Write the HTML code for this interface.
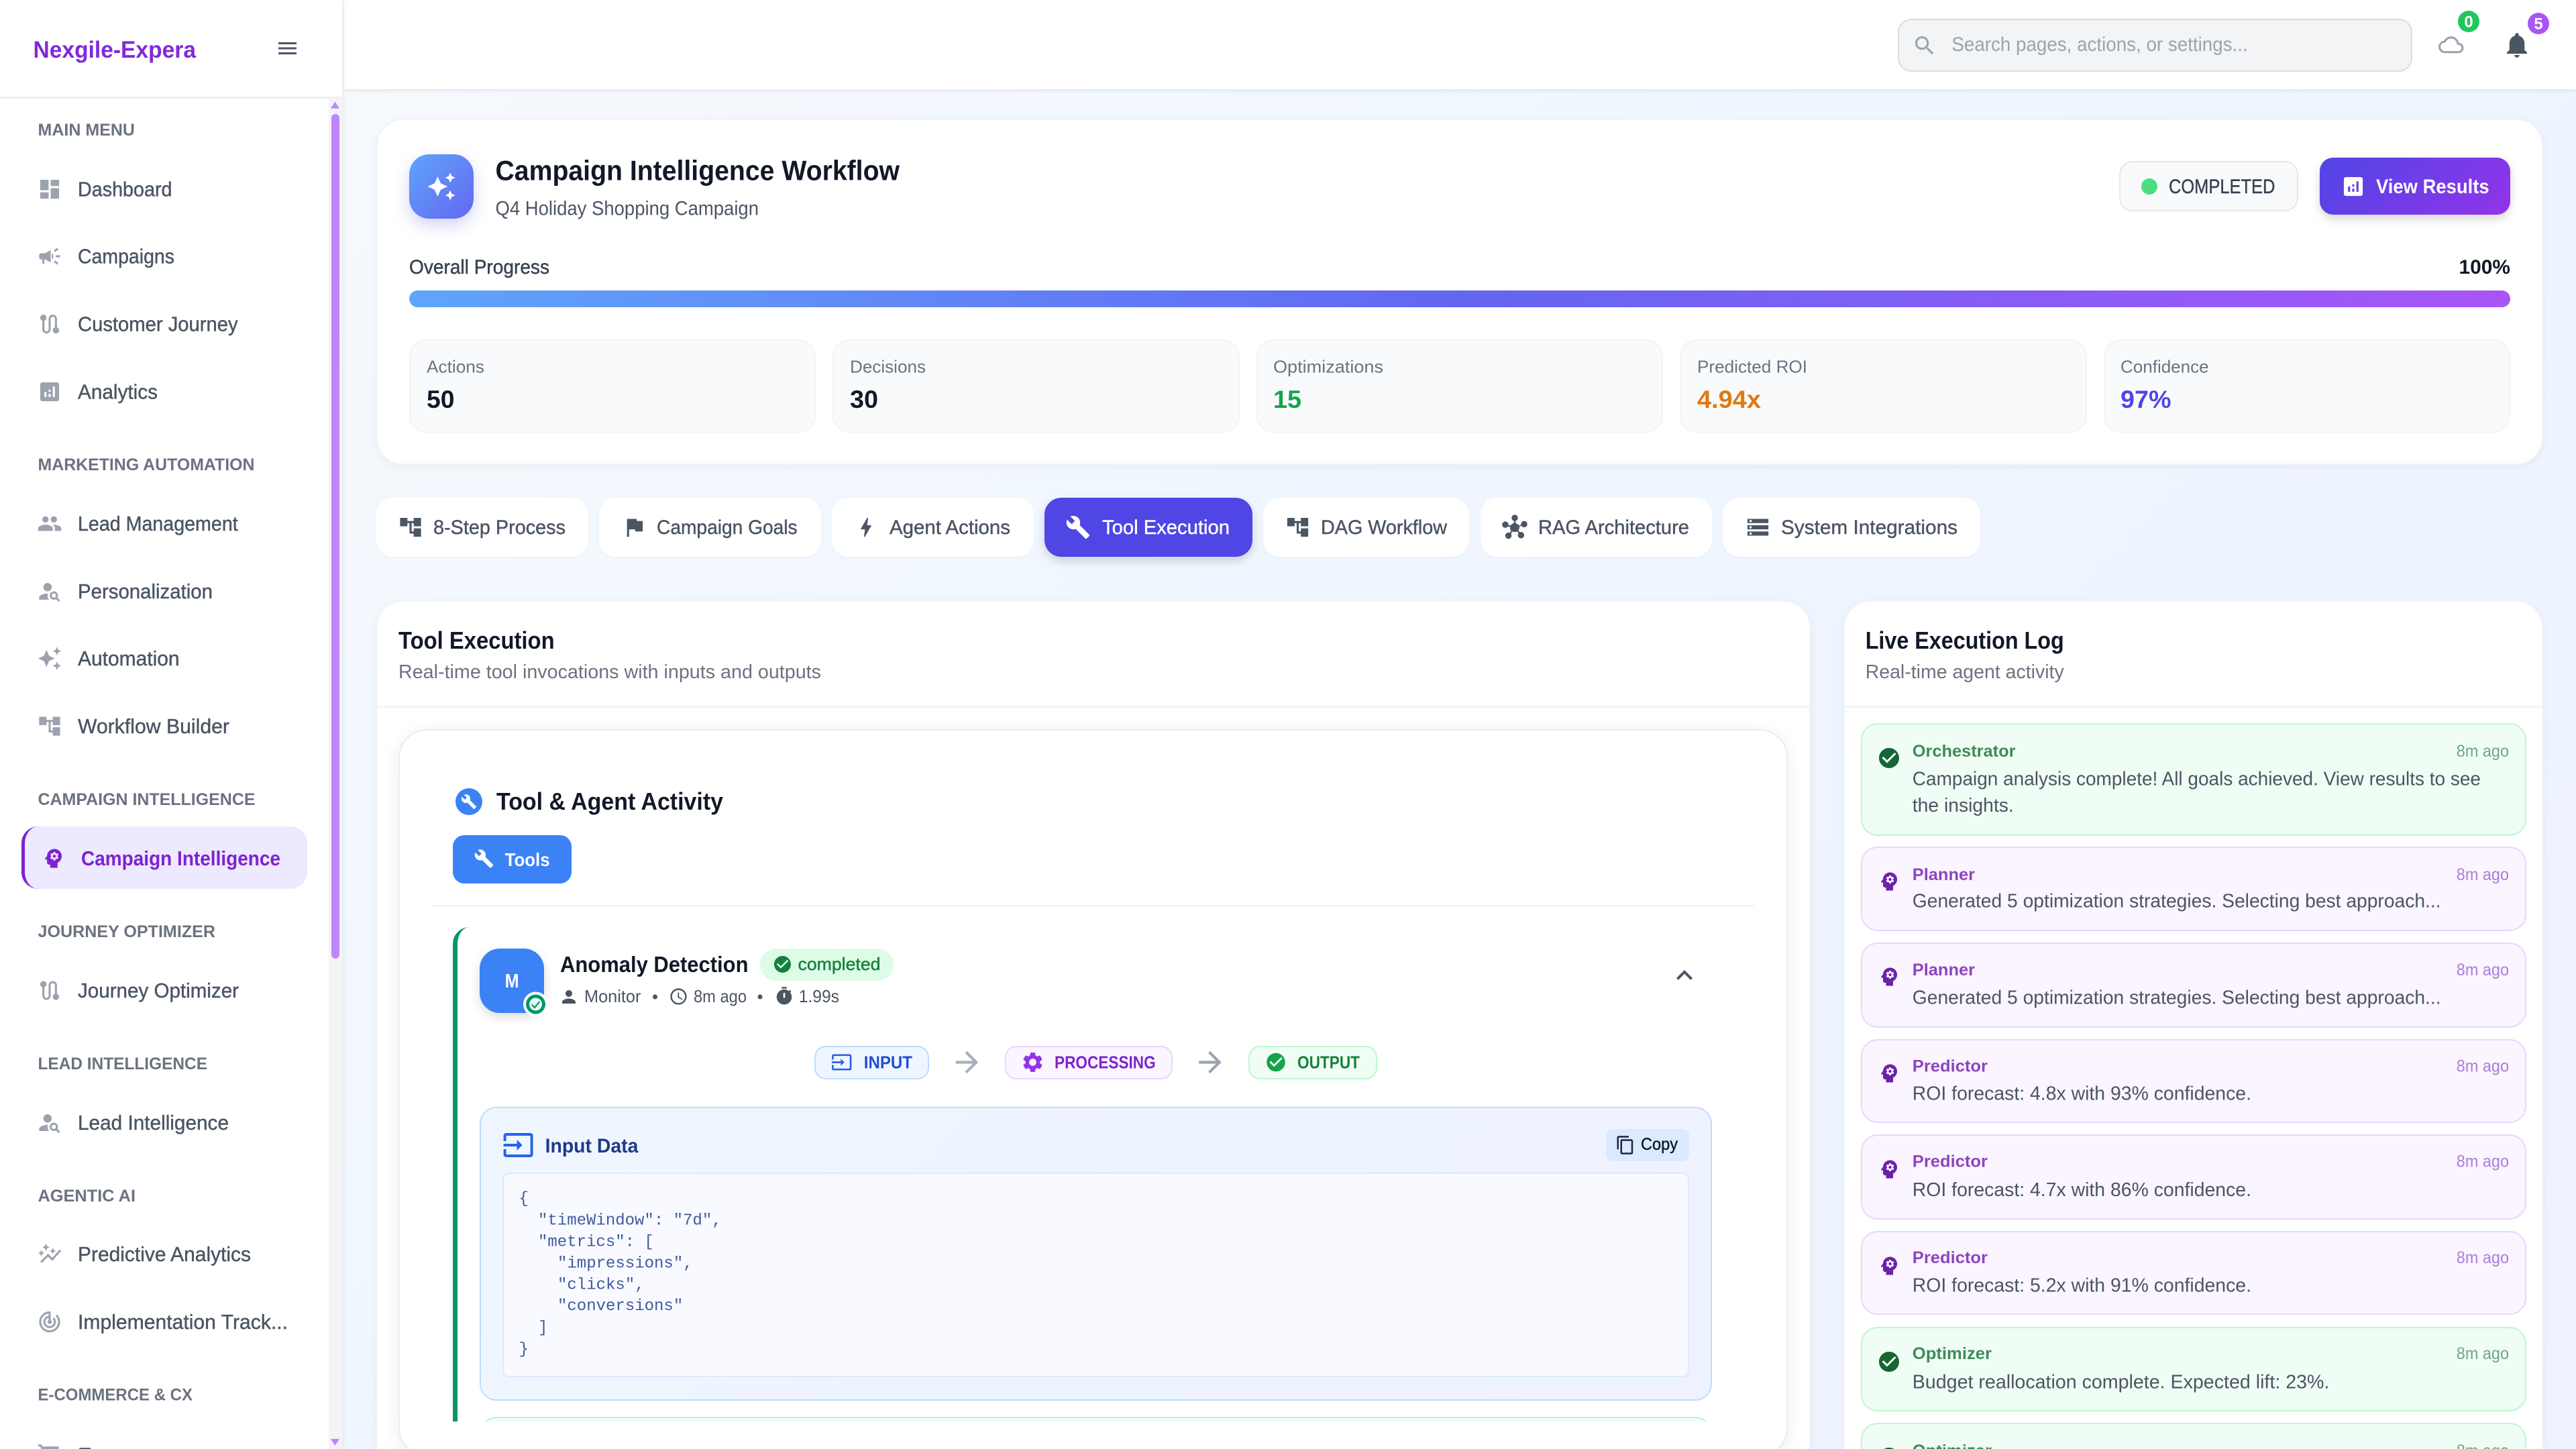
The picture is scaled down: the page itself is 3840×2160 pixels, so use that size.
<!DOCTYPE html>
<html lang="en">
<head>
<meta charset="utf-8">
<title>Campaign Intelligence Workflow</title>
<style>
html,body{margin:0;padding:0;width:3840px;height:2160px;overflow:hidden}
#root{position:absolute;left:0;top:0;width:3840px;height:2160px;overflow:hidden;background:linear-gradient(135deg,#f8fafc 0%,#eff6ff 50%,#eef2ff 100%);font-family:"Liberation Sans",sans-serif}
.b{position:absolute;box-sizing:border-box}
.card{background:#fff;border:2px solid #f3f4f6;border-bottom:0;border-radius:40px 40px 0 0;box-shadow:0 3px 12px rgba(0,0,0,.05)}
.stat{background:#f9fafb;border:2.5px solid #f3f4f6;border-radius:25px;top:506px;height:139px;width:606.4px}
.tab{background:#fff;border-radius:25px;top:742px;height:88px;box-shadow:0 1px 4px rgba(0,0,0,.03)}
.chip{border-radius:17px;top:1558.5px;height:50.5px;border:2.5px solid}
.log{left:2773.7px;width:992.3px;border-radius:25px;border:2.5px solid}
.g{background:#f0fdf4;border-color:#bbf7d0}
.p{background:#faf5ff;border-color:#e9d5ff}
svg.ov{position:absolute;left:0;top:0;width:3840px;height:2160px;overflow:hidden}
text{font-family:"Liberation Sans",sans-serif}
.m{stroke:currentColor;stroke-width:.45}
.mono text{font-family:"Liberation Mono",monospace;font-size:24px;fill:#3f5aa0;white-space:pre}
</style>
</head>
<body>
<div id="root">

<!-- top bar -->
<div class="b" style="left:512px;top:0;width:3328px;height:133px;background:#fff;box-shadow:0 2px 6px rgba(0,0,0,.08)"></div>
<div class="b" style="left:2829px;top:27.5px;width:767px;height:79px;background:#f3f4f6;border:2.5px solid #d9dce3;border-radius:20px"></div>

<!-- sidebar -->
<div class="b" style="left:0;top:0;width:510px;height:2160px;background:#fff;box-shadow:2px 0 6px rgba(0,0,0,.06)"></div>
<div class="b" style="left:0;top:144px;width:510px;height:2.5px;background:#eceef1"></div>
<div class="b" style="left:490px;top:146.5px;width:20px;height:2013.5px;background:#f3f4f6"></div>
<div class="b" style="left:494px;top:170px;width:11.6px;height:1259px;background:#c084fc;border-radius:6px"></div>
<div class="b" style="left:32px;top:1232px;width:426px;height:93px;background:#ede9fe;border-left:5px solid #7e22ce;border-radius:25px"></div>

<!-- header card -->
<div class="b card" style="left:561px;top:177px;width:3230px;height:516px;border-bottom:2px solid #f3f4f6;border-radius:40px"></div>
<div class="b" style="left:610px;top:230px;width:96px;height:96px;border-radius:30px;background:linear-gradient(135deg,#60a5fa,#6366f1);box-shadow:0 10px 24px rgba(99,102,241,.28)"></div>
<div class="b" style="left:3159px;top:240px;width:267px;height:75px;background:#f9fafb;border:2.5px solid #e5e7eb;border-radius:20px"></div>
<div class="b" style="left:3457.6px;top:235px;width:284.4px;height:85px;border-radius:20px;background:linear-gradient(135deg,#4f46e5,#9333ea);box-shadow:0 6px 14px rgba(0,0,0,.16)"></div>
<div class="b" style="left:610px;top:433px;width:3132px;height:25px;border-radius:13px;background:linear-gradient(90deg,#60a5fa,#6366f1 50%,#a855f7)"></div>
<div class="b stat" style="left:610px"></div>
<div class="b stat" style="left:1241.4px"></div>
<div class="b stat" style="left:1872.8px"></div>
<div class="b stat" style="left:2504.2px"></div>
<div class="b stat" style="left:3135.6px"></div>

<!-- tabs -->
<div class="b tab" style="left:561px;width:316px"></div>
<div class="b tab" style="left:893px;width:331px"></div>
<div class="b tab" style="left:1240px;width:301px"></div>
<div class="b tab" style="left:1557px;width:310px;background:#4f46e5;box-shadow:0 6px 14px rgba(0,0,0,.16)"></div>
<div class="b tab" style="left:1883px;width:307px"></div>
<div class="b tab" style="left:2207px;width:345px"></div>
<div class="b tab" style="left:2568px;width:384px"></div>

<!-- left panel -->
<div class="b card" style="left:561px;top:895px;width:2138px;height:1265px"></div>
<div class="b" style="left:563px;top:1052px;width:2134px;height:2.5px;background:#f3f4f6"></div>
<div class="b" style="left:594px;top:1087px;width:2071px;height:1084px;background:#fff;border:2.5px solid #e8ecf6;border-radius:42px;box-shadow:0 5px 28px rgba(0,0,0,.07)"></div>
<div class="b" style="left:675.4px;top:1245px;width:176.6px;height:72px;background:#3b82f6;border-radius:17px"></div>
<div class="b" style="left:643.5px;top:1348.5px;width:1971.5px;height:2px;background:#edf0f4"></div>

<div class="b" style="left:0;top:0;width:3840px;height:2118.5px;overflow:hidden">
  <div class="b" style="left:675px;top:1382px;width:1900px;height:900px;border-left:7.5px solid #059669;border-radius:25px"></div>
  <div class="b" style="left:715.4px;top:2111.5px;width:1837px;height:200px;background:#f0fdf4;border:2.5px solid #bbf7d0;border-radius:25px"></div>
</div>
<div class="b" style="left:715px;top:1414px;width:96px;height:96px;background:#3b82f6;border-radius:30px;box-shadow:0 6px 16px rgba(0,0,0,.14)"></div>
<div class="b" style="left:1132.7px;top:1414px;width:199px;height:48px;background:#dcfce7;border-radius:24px"></div>
<div class="b chip" style="left:1213.7px;width:171px;background:#eff6ff;border-color:#bfdbfe"></div>
<div class="b chip" style="left:1498.4px;width:249.6px;background:#faf5ff;border-color:#e9d5ff"></div>
<div class="b chip" style="left:1861px;width:191.5px;background:#f0fdf4;border-color:#bbf7d0"></div>
<div class="b" style="left:715.4px;top:1649.5px;width:1837px;height:438px;background:linear-gradient(135deg,#eff6ff,#eef2ff);border:2.5px solid #bfdbfe;border-radius:25px"></div>
<div class="b" style="left:2394px;top:1683px;width:124px;height:48px;background:#dbeafe;border-radius:10px"></div>
<div class="b" style="left:749.3px;top:1747.6px;width:1768.5px;height:305.4px;background:#f8faff;border:2px solid #dbeafe;border-radius:10px"></div>

<!-- right panel -->
<div class="b card" style="left:2748.4px;top:895px;width:1042.6px;height:1265px"></div>
<div class="b" style="left:2750px;top:1052px;width:1039px;height:2.5px;background:#f3f4f6"></div>
<div class="b log g" style="top:1078px;height:167.7px"></div>
<div class="b log p" style="top:1262.4px;height:125.6px"></div>
<div class="b log p" style="top:1404.5px;height:127.5px"></div>
<div class="b log p" style="top:1548.6px;height:125.4px"></div>
<div class="b log p" style="top:1691.4px;height:127px"></div>
<div class="b log p" style="top:1835px;height:125.4px"></div>
<div class="b log g" style="top:1977.6px;height:126.9px"></div>
<div class="b log g" style="top:2121px;height:39px;border-bottom:0;border-radius:25px 25px 0 0"></div>

<svg class="ov" viewBox="0 0 3840 2160" xmlns="http://www.w3.org/2000/svg">
<defs>
<symbol id="i-dash" viewBox="0 0 24 24"><path d="M3 13h8V3H3v10zm0 8h8v-6H3v6zm10 0h8V11h-8v10zm0-18v6h8V3h-8z"/></symbol>
<symbol id="i-camp" viewBox="0 0 24 24"><path d="M18 11v2h4v-2h-4zm-2 6.61c.96.71 2.21 1.65 3.2 2.39.4-.53.8-1.07 1.2-1.6-.99-.74-2.24-1.68-3.2-2.4-.4.54-.8 1.08-1.2 1.61zM20.4 5.6c-.4-.53-.8-1.07-1.2-1.6-.99.74-2.24 1.68-3.2 2.4.4.53.8 1.07 1.2 1.6.96-.72 2.21-1.65 3.2-2.4zM4 9c-1.1 0-2 .9-2 2v2c0 1.1.9 2 2 2h1v4h2v-4h1l5 3V6L8 9H4zm11.5 3c0-1.33-.58-2.53-1.5-3.35v6.69c.92-.81 1.5-2.01 1.5-3.34z"/></symbol>
<symbol id="i-route" viewBox="0 0 24 24"><path d="M19 15.18V7c0-2.21-1.79-4-4-4s-4 1.79-4 4v10c0 1.1-.9 2-2 2s-2-.9-2-2V8.82C8.16 8.4 9 7.3 9 6c0-1.66-1.34-3-3-3S3 4.34 3 6c0 1.3.84 2.4 2 2.82V17c0 2.21 1.79 4 4 4s4-1.79 4-4V7c0-1.1.9-2 2-2s2 .9 2 2v8.18c-1.16.41-2 1.51-2 2.82 0 1.66 1.34 3 3 3s3-1.34 3-3c0-1.3-.84-2.4-2-2.82z"/></symbol>
<symbol id="i-chart" viewBox="0 0 24 24"><path d="M19 3H5c-1.1 0-2 .9-2 2v14c0 1.1.9 2 2 2h14c1.1 0 2-.9 2-2V5c0-1.1-.9-2-2-2zM9 17H7v-5h2v5zm4 0h-2v-3h2v3zm0-5h-2v-2h2v2zm4 5h-2V7h2v10z"/></symbol>
<symbol id="i-people" viewBox="0 0 24 24"><path d="M16 11c1.66 0 2.99-1.34 2.99-3S17.66 5 16 5c-1.66 0-3 1.34-3 3s1.34 3 3 3zm-8 0c1.66 0 2.99-1.34 2.99-3S9.66 5 8 5C6.34 5 5 6.34 5 8s1.34 3 3 3zm0 2c-2.33 0-7 1.17-7 3.5V19h14v-2.5c0-2.33-4.67-3.5-7-3.5zm8 0c-.29 0-.62.02-.97.05 1.16.84 1.97 1.97 1.97 3.45V19h6v-2.5c0-2.33-4.67-3.5-7-3.5z"/></symbol>
<symbol id="i-psearch" viewBox="0 0 24 24"><path d="M10 12c2.21 0 4-1.79 4-4s-1.79-4-4-4-4 1.79-4 4 1.79 4 4 4zm.35 2.01C7.62 13.91 2 15.27 2 18v2h9.54c-2.47-2.76-1.23-5.89-1.19-5.99zM19.43 18.02c.36-.59.57-1.28.57-2.02 0-2.21-1.79-4-4-4s-4 1.79-4 4 1.79 4 4 4c.74 0 1.43-.22 2.02-.57L20.59 22 22 20.59l-2.57-2.57zM16 18c-1.1 0-2-.9-2-2s.9-2 2-2 2 .9 2 2-.9 2-2 2z"/></symbol>
<symbol id="i-auto" viewBox="0 0 24 24"><path d="M19 9l1.25-2.75L23 5l-2.75-1.25L19 1l-1.25 2.75L15 5l2.75 1.25L19 9zm-7.5.5L9 4 6.5 9.5 1 12l5.5 2.5L9 20l2.5-5.5L17 12l-5.5-2.5zM19 15l-1.25 2.75L15 19l2.75 1.25L19 23l1.25-2.75L23 19l-2.75-1.25L19 15z"/></symbol>
<symbol id="i-tree" viewBox="0 0 24 24"><path d="M22 11V3h-7v3H9V3H2v8h7V8h2v10h4v3h7v-8h-7v3h-2V8h2v3z"/></symbol>
<symbol id="i-psy" viewBox="0 0 24 24"><path d="M13 8.57c-.79 0-1.43.64-1.43 1.43s.64 1.43 1.43 1.43 1.43-.64 1.43-1.43-.64-1.43-1.43-1.43z"/><path d="M13 3C9.25 3 6.2 5.94 6.02 9.64L4.1 12.2c-.25.33-.01.8.4.8H6v3c0 1.1.9 2 2 2h1v3h7v-4.68c2.36-1.12 4-3.53 4-6.32 0-3.87-3.13-7-7-7zm3 7c0 .13-.01.26-.02.39l.83.66c.08.06.1.16.05.25l-.8 1.39c-.05.09-.16.12-.24.09l-.99-.4c-.21.16-.43.29-.67.39L14 13.83c-.01.1-.1.17-.2.17h-1.6c-.1 0-.18-.07-.2-.17l-.15-1.06c-.25-.1-.47-.23-.68-.39l-.99.4c-.09.03-.2 0-.25-.09l-.8-1.39c-.05-.08-.03-.19.05-.25l.84-.66c-.01-.13-.02-.26-.02-.39 0-.13.02-.27.04-.39l-.85-.66c-.08-.06-.1-.16-.05-.26l.8-1.38c.05-.09.15-.12.24-.09l1 .4c.2-.15.43-.29.67-.39l.15-1.06c.02-.1.1-.17.2-.17h1.6c.1 0 .18.07.2.17l.15 1.06c.24.1.46.23.67.39l1-.4c.09-.03.2 0 .24.09l.8 1.38c.05.09.03.2-.05.26l-.85.66c.03.12.04.25.04.39z"/></symbol>
<symbol id="i-graph" viewBox="0 0 24 24"><path d="M14.06 9.94 12 9l2.06-.94L15 6l.94 2.06L18 9l-2.06.94L15 12l-.94-2.06zM4 14l.94-2.06L7 11l-2.06-.94L4 8l-.94 2.06L1 11l2.06.94L4 14zm4.5-5 1.09-2.41L12 5.5 9.59 4.41 8.5 2 7.41 4.41 5 5.5l2.41 1.09L8.5 9zm-4 11.5 6-6.01 4 4L23 8.93l-1.41-1.41-7.09 7.97-4-4L3 19l1.5 1.5z"/></symbol>
<symbol id="i-track" viewBox="0 0 24 24"><path d="M19.07 4.93l-1.41 1.41C19.1 7.79 20 9.79 20 12c0 4.42-3.58 8-8 8s-8-3.58-8-8c0-4.08 3.05-7.44 7-7.93v2.02C8.16 6.57 6 9.03 6 12c0 3.31 2.69 6 6 6s6-2.69 6-6c0-1.66-.67-3.16-1.76-4.24l-1.41 1.41C15.55 9.9 16 10.9 16 12c0 2.21-1.79 4-4 4s-4-1.79-4-4c0-1.86 1.28-3.41 3-3.86v2.14c-.6.35-1 .98-1 1.72 0 1.1.9 2 2 2s2-.9 2-2c0-.74-.4-1.38-1-1.72V2h-1C6.48 2 2 6.48 2 12s4.48 10 10 10 10-4.48 10-10c0-2.76-1.12-5.26-2.93-7.07z"/></symbol>
<symbol id="i-cart" viewBox="0 0 24 24"><path d="M7 18c-1.1 0-1.99.9-1.99 2S5.9 22 7 22s2-.9 2-2-.9-2-2-2zM1 2v2h2l3.6 7.59-1.35 2.45c-.16.28-.25.61-.25.96 0 1.1.9 2 2 2h12v-2H7.42c-.14 0-.25-.11-.25-.25l.03-.12.9-1.63h7.45c.75 0 1.41-.41 1.75-1.03l3.58-6.47c.08-.14.12-.31.12-.48 0-.55-.45-1-1-1H5.21l-.94-2H1zm16 16c-1.1 0-1.99.9-1.99 2s.89 2 1.99 2 2-.9 2-2-.9-2-2-2z"/></symbol>
<symbol id="i-menu" viewBox="0 0 24 24"><path d="M3 18h18v-2H3v2zm0-5h18v-2H3v2zm0-7v2h18V6H3z"/></symbol>
<symbol id="i-search" viewBox="0 0 24 24"><path d="M15.5 14h-.79l-.28-.27C15.41 12.59 16 11.11 16 9.5 16 5.91 13.09 3 9.5 3S3 5.91 3 9.5 5.91 16 9.5 16c1.61 0 3.09-.59 4.23-1.57l.27.28v.79l5 4.99L20.49 19l-4.99-5zm-6 0C7.01 14 5 11.99 5 9.5S7.01 5 9.5 5 14 7.01 14 9.5 11.99 14 9.5 14z"/></symbol>
<symbol id="i-cloud" viewBox="0 0 24 24"><path d="M19.35 10.04C18.67 6.59 15.64 4 12 4 9.11 4 6.6 5.64 5.35 8.04 2.34 8.36 0 10.91 0 14c0 3.31 2.69 6 6 6h13c2.76 0 5-2.24 5-5 0-2.64-2.05-4.78-4.65-4.96zM19 18H6c-2.21 0-4-1.79-4-4 0-2.05 1.53-3.76 3.56-3.97l1.07-.11.5-.95C8.08 7.14 9.94 6 12 6c2.62 0 4.88 1.86 5.39 4.43l.3 1.5 1.53.11c1.56.1 2.78 1.41 2.78 2.96 0 1.65-1.35 3-3 3z"/></symbol>
<symbol id="i-bell" viewBox="0 0 24 24"><path d="M12 22c1.1 0 2-.9 2-2h-4c0 1.1.89 2 2 2zm6-6v-5c0-3.07-1.64-5.64-4.5-6.32V4c0-.83-.67-1.5-1.5-1.5s-1.5.67-1.5 1.5v.68C7.63 5.36 6 7.92 6 11v5l-2 2v1h16v-1l-2-2z"/></symbol>
<symbol id="i-flag" viewBox="0 0 24 24"><path d="M14.4 6L14 4H5v17h2v-7h5.6l.4 2h7V6z"/></symbol>
<symbol id="i-bolt" viewBox="0 0 24 24"><path d="M11 21h-1l1-7H7.5c-.88 0-.33-.75-.31-.78C8.48 10.94 10.42 7.54 13.01 3h1l-1 7h3.51c.4 0 .62.19.4.66C12.97 17.55 11 21 11 21z"/></symbol>
<symbol id="i-build" viewBox="0 0 24 24"><path d="M22.7 19l-9.1-9.1c.9-2.3.4-5-1.5-6.9-2-2-5-2.4-7.4-1.3L9 6 6 9 1.6 4.7C.4 7.1.9 10.1 2.9 12.1c1.9 1.9 4.6 2.4 6.9 1.5l9.1 9.1c.4.4 1 .4 1.4 0l2.3-2.3c.5-.4.5-1.1.1-1.4z"/></symbol>
<symbol id="i-hub" viewBox="0 0 24 24"><path d="M8.4 18.2c.38.5.6 1.12.6 1.8 0 1.66-1.34 3-3 3s-3-1.34-3-3 1.34-3 3-3c.44 0 .85.09 1.23.26l1.41-1.77c-.92-1.03-1.29-2.39-1.09-3.69l-2.03-.68c-.54.83-1.46 1.38-2.52 1.38-1.66 0-3-1.34-3-3s1.34-3 3-3 3 1.34 3 3c0 .07 0 .14-.01.21l2.03.68c.64-1.21 1.82-2.09 3.22-2.32V5.91C9.96 5.57 9 4.4 9 3c0-1.66 1.34-3 3-3s3 1.34 3 3c0 1.4-.96 2.57-2.25 2.91v2.16c1.4.23 2.58 1.11 3.22 2.32l2.03-.68C18 9.14 18 9.07 18 9c0-1.66 1.34-3 3-3s3 1.34 3 3-1.34 3-3 3c-1.06 0-1.98-.55-2.52-1.37l-2.03.68c.2 1.29-.16 2.65-1.09 3.69l1.41 1.77c.38-.17.79-.26 1.23-.26 1.66 0 3 1.34 3 3s-1.34 3-3 3-3-1.34-3-3c0-.68.22-1.3.6-1.8l-1.41-1.77c-1.35.75-3.01.76-4.37 0L8.4 18.2z"/></symbol>
<symbol id="i-storage" viewBox="0 0 24 24"><path d="M2 20h20v-4H2v4zm2-3h2v2H4v-2zM2 4v4h20V4H2zm4 3H4V5h2v2zm-4 7h20v-4H2v4zm2-3h2v2H4v-2z"/></symbol>
<symbol id="i-ok" viewBox="0 0 24 24"><path d="M12 2C6.48 2 2 6.48 2 12s4.48 10 10 10 10-4.48 10-10S17.52 2 12 2zm-2 15l-5-5 1.41-1.41L10 14.17l7.59-7.59L19 8l-9 9z"/></symbol>
<symbol id="i-person" viewBox="0 0 24 24"><path d="M12 12c2.21 0 4-1.79 4-4s-1.79-4-4-4-4 1.79-4 4 1.79 4 4 4zm0 2c-2.67 0-8 1.34-8 4v2h16v-2c0-2.66-5.33-4-8-4z"/></symbol>
<symbol id="i-clock" viewBox="0 0 24 24"><path d="M11.99 2C6.47 2 2 6.48 2 12s4.47 10 9.99 10C17.52 22 22 17.52 22 12S17.52 2 11.99 2zM12 20c-4.42 0-8-3.58-8-8s3.58-8 8-8 8 3.58 8 8-3.58 8-8 8zm.5-13H11v6l5.25 3.15.75-1.23-4.5-2.67z"/></symbol>
<symbol id="i-timer" viewBox="0 0 24 24"><path fill-rule="evenodd" d="M15 1H9v2h6V1zm-4 13h2V8h-2v6zm8.03-6.61 1.42-1.42c-.43-.51-.9-.99-1.41-1.41l-1.42 1.42C16.07 4.74 14.12 4 12 4c-4.97 0-9 4.03-9 9s4.02 9 9 9 9-4.03 9-9c0-2.12-.74-4.07-1.97-5.61z"/></symbol>
<symbol id="i-less" viewBox="0 0 24 24"><path d="M12 8l-6 6 1.41 1.41L12 10.83l4.59 4.58L18 14z"/></symbol>
<symbol id="i-input" viewBox="0 0 24 24"><path d="M21 3.01H3c-1.1 0-2 .9-2 2V9h2V4.99h18v14.03H3V15H1v4.01c0 1.1.9 1.98 2 1.98h18c1.1 0 2-.88 2-1.98v-14c0-1.11-.9-2-2-2zM11 16l4-4-4-4v3H1v2h10v3z"/></symbol>
<symbol id="i-gear" viewBox="0 0 24 24"><path d="M19.14 12.94c.04-.3.06-.61.06-.94 0-.32-.02-.64-.07-.94l2.03-1.58c.18-.14.23-.41.12-.61l-1.92-3.32c-.12-.22-.37-.29-.59-.22l-2.39.96c-.5-.38-1.03-.7-1.62-.94l-.36-2.54c-.04-.24-.24-.41-.48-.41h-3.84c-.24 0-.43.17-.47.41l-.36 2.54c-.59.24-1.13.57-1.62.94l-2.39-.96c-.22-.08-.47 0-.59.22L2.74 8.87c-.12.21-.08.47.12.61l2.03 1.58c-.05.3-.09.63-.09.94s.02.64.07.94l-2.03 1.58c-.18.14-.23.41-.12.61l1.92 3.32c.12.22.37.29.59.22l2.39-.96c.5.38 1.03.7 1.62.94l.36 2.54c.05.24.24.41.48.41h3.84c.24 0 .44-.17.47-.41l.36-2.54c.59-.24 1.13-.56 1.62-.94l2.39.96c.22.08.47 0 .59-.22l1.92-3.32c.12-.22.07-.47-.12-.61l-2.01-1.58zM12 15.6c-1.98 0-3.6-1.62-3.6-3.6s1.62-3.6 3.6-3.6 3.6 1.62 3.6 3.6-1.62 3.6-3.6 3.6z"/></symbol>
<symbol id="i-arrow" viewBox="0 0 24 24"><path d="M12 4l-1.41 1.41L16.17 11H4v2h12.17l-5.58 5.59L12 20l8-8z"/></symbol>
<symbol id="i-copy" viewBox="0 0 24 24"><path d="M16 1H4c-1.1 0-2 .9-2 2v14h2V3h12V1zm3 4H8c-1.1 0-2 .9-2 2v14c0 1.1.9 2 2 2h11c1.1 0 2-.9 2-2V7c0-1.1-.9-2-2-2zm0 16H8V7h11v14z"/></symbol>
</defs>

<!-- scrollbar arrows -->
<path d="M493 161.6L499.5 151.5L506 161.6Z" fill="#c084fc"/>
<path d="M493 2145L499.5 2155L506 2145Z" fill="#c084fc"/>

<!-- logo -->
<text x="49.5" y="86" font-size="35" font-weight="700" fill="#8129d9" textLength="242.5" lengthAdjust="spacingAndGlyphs">Nexgile-Expera</text>
<use href="#i-menu" x="410.5" y="54" width="36" height="36" fill="#4b5563"/>

<!-- sidebar section labels -->
<g font-size="25" font-weight="700" fill="#6b7280">
<text x="56.5" y="202" textLength="144.5" lengthAdjust="spacingAndGlyphs">MAIN MENU</text>
<text x="56.5" y="701" textLength="323" lengthAdjust="spacingAndGlyphs">MARKETING AUTOMATION</text>
<text x="56.5" y="1200" textLength="324" lengthAdjust="spacingAndGlyphs">CAMPAIGN INTELLIGENCE</text>
<text x="56.5" y="1397" textLength="264.5" lengthAdjust="spacingAndGlyphs">JOURNEY OPTIMIZER</text>
<text x="56.5" y="1594" textLength="252.5" lengthAdjust="spacingAndGlyphs">LEAD INTELLIGENCE</text>
<text x="56.5" y="1791" textLength="145.5" lengthAdjust="spacingAndGlyphs">AGENTIC AI</text>
<text x="56.5" y="2087.5" textLength="230.5" lengthAdjust="spacingAndGlyphs">E-COMMERCE &amp; CX</text>
</g>

<!-- sidebar items -->
<g font-size="31" fill="#4b5563" style="color:#4b5563" class="m">
<text x="116" y="292.5" textLength="140.5" lengthAdjust="spacingAndGlyphs">Dashboard</text>
<text x="116" y="392.5" textLength="144" lengthAdjust="spacingAndGlyphs">Campaigns</text>
<text x="116" y="493.5" textLength="238.6" lengthAdjust="spacingAndGlyphs">Customer Journey</text>
<text x="116" y="594.5" textLength="119" lengthAdjust="spacingAndGlyphs">Analytics</text>
<text x="116" y="791" textLength="238.7" lengthAdjust="spacingAndGlyphs">Lead Management</text>
<text x="116" y="892" textLength="201" lengthAdjust="spacingAndGlyphs">Personalization</text>
<text x="116" y="992" textLength="151.6" lengthAdjust="spacingAndGlyphs">Automation</text>
<text x="116" y="1093" textLength="226" lengthAdjust="spacingAndGlyphs">Workflow Builder</text>
<text x="116" y="1487" textLength="240" lengthAdjust="spacingAndGlyphs">Journey Optimizer</text>
<text x="116" y="1684" textLength="225" lengthAdjust="spacingAndGlyphs">Lead Intelligence</text>
<text x="116" y="1880" textLength="258" lengthAdjust="spacingAndGlyphs">Predictive Analytics</text>
<text x="116" y="1981" textLength="313" lengthAdjust="spacingAndGlyphs">Implementation Track...</text>
<text x="116" y="2179.5">Ecommerce</text>
</g>
<text x="121" y="1290" font-size="31" font-weight="700" fill="#7e22ce" textLength="297" lengthAdjust="spacingAndGlyphs">Campaign Intelligence</text>
<use href="#i-psy" x="60.75" y="1260.75" width="37.5" height="37.5" fill="#7e22ce"/>

<g fill="#9ca3af">
<use href="#i-dash" x="55.25" y="263.25" width="37.5" height="37.5"/>
<use href="#i-camp" x="55.25" y="363.25" width="37.5" height="37.5"/>
<use href="#i-route" x="55.25" y="464.25" width="37.5" height="37.5"/>
<use href="#i-chart" x="55.25" y="565.25" width="37.5" height="37.5"/>
<use href="#i-people" x="55.25" y="761.75" width="37.5" height="37.5"/>
<use href="#i-psearch" x="55.25" y="862.75" width="37.5" height="37.5"/>
<use href="#i-auto" x="55.25" y="962.75" width="37.5" height="37.5"/>
<use href="#i-tree" x="55.25" y="1063.75" width="37.5" height="37.5"/>
<use href="#i-route" x="55.25" y="1457.75" width="37.5" height="37.5"/>
<use href="#i-psearch" x="55.25" y="1654.75" width="37.5" height="37.5"/>
<use href="#i-graph" x="55.25" y="1850.75" width="37.5" height="37.5"/>
<use href="#i-track" x="55.25" y="1951.75" width="37.5" height="37.5"/>
<use href="#i-cart" x="55.25" y="2150" width="37.5" height="37.5"/>
</g>

<!-- top bar content -->
<use href="#i-search" x="2850.3" y="49.3" width="37.5" height="37.5" fill="#9ca3af"/>
<text x="2909.4" y="76" font-size="30" fill="#9ca3af" textLength="441.3" lengthAdjust="spacingAndGlyphs">Search pages, actions, or settings...</text>
<use href="#i-cloud" x="3635" y="48" width="37.5" height="37.5" fill="#9ca3af"/>
<circle cx="3680" cy="32" r="16" fill="#22c55e"/>
<text x="3680" y="40.5" font-size="24" font-weight="700" fill="#fff" text-anchor="middle">0</text>
<use href="#i-bell" x="3729.5" y="44.5" width="45" height="45" fill="#4b5563"/>
<circle cx="3784" cy="35" r="16" fill="#a855f7"/>
<text x="3784" y="43.5" font-size="24" font-weight="700" fill="#fff" text-anchor="middle">5</text>

<!-- header card content -->
<use href="#i-auto" x="635.5" y="255.5" width="45" height="45" fill="#fff"/>
<text x="738.5" y="268.5" font-size="42" font-weight="700" fill="#111827" textLength="602.5" lengthAdjust="spacingAndGlyphs">Campaign Intelligence Workflow</text>
<text x="738.5" y="320.5" font-size="30" fill="#4b5563" textLength="392.5" lengthAdjust="spacingAndGlyphs">Q4 Holiday Shopping Campaign</text>
<circle cx="3204" cy="278" r="12" fill="#4ade80"/>
<text x="3233" y="288" font-size="30" fill="#374151" style="color:#374151" class="m" textLength="158.4" lengthAdjust="spacingAndGlyphs">COMPLETED</text>
<use href="#i-chart" x="3489.25" y="259.25" width="37.5" height="37.5" fill="#fff"/>
<text x="3542" y="288" font-size="30" font-weight="700" fill="#fff" textLength="168.6" lengthAdjust="spacingAndGlyphs">View Results</text>
<text x="610" y="408" font-size="30" fill="#374151" style="color:#374151" class="m" textLength="209" lengthAdjust="spacingAndGlyphs">Overall Progress</text>
<text x="3665.5" y="408" font-size="30" font-weight="700" fill="#111827" textLength="76.5" lengthAdjust="spacingAndGlyphs">100%</text>

<g font-size="26" fill="#6b7280">
<text x="636" y="555.4" textLength="86" lengthAdjust="spacingAndGlyphs">Actions</text>
<text x="1267" y="555.4" textLength="113" lengthAdjust="spacingAndGlyphs">Decisions</text>
<text x="1898" y="555.4" textLength="164" lengthAdjust="spacingAndGlyphs">Optimizations</text>
<text x="2530" y="555.4" textLength="164" lengthAdjust="spacingAndGlyphs">Predicted ROI</text>
<text x="3161" y="555.4" textLength="131.6" lengthAdjust="spacingAndGlyphs">Confidence</text>
</g>
<g font-size="37.5" font-weight="700">
<text x="636" y="608" fill="#111827" textLength="41.5" lengthAdjust="spacingAndGlyphs">50</text>
<text x="1267" y="608" fill="#111827" textLength="42" lengthAdjust="spacingAndGlyphs">30</text>
<text x="1898" y="608" fill="#16a34a" textLength="42" lengthAdjust="spacingAndGlyphs">15</text>
<text x="2530" y="608" fill="#df7a10" textLength="95" lengthAdjust="spacingAndGlyphs">4.94x</text>
<text x="3161" y="608" fill="#4f46e5" textLength="75.6" lengthAdjust="spacingAndGlyphs">97%</text>
</g>

<!-- tabs content -->
<g fill="#4b5563">
<use href="#i-tree" x="593.25" y="767.25" width="37.5" height="37.5"/>
<use href="#i-flag" x="926.85" y="767.25" width="37.5" height="37.5"/>
<use href="#i-bolt" x="1272.25" y="767.25" width="37.5" height="37.5"/>
<use href="#i-build" x="1588.25" y="767.25" width="37.5" height="37.5" fill="#fff"/>
<use href="#i-tree" x="1915.75" y="767.25" width="37.5" height="37.5"/>
<use href="#i-hub" x="2239.25" y="767.25" width="37.5" height="37.5"/>
<use href="#i-storage" x="2601.75" y="767.25" width="37.5" height="37.5"/>
</g>
<g font-size="30" fill="#4b5563" style="color:#4b5563" class="m">
<text x="646" y="796" textLength="197" lengthAdjust="spacingAndGlyphs">8-Step Process</text>
<text x="979" y="796" textLength="209.6" lengthAdjust="spacingAndGlyphs">Campaign Goals</text>
<text x="1326" y="796" textLength="180" lengthAdjust="spacingAndGlyphs">Agent Actions</text>
<text x="1969" y="796" textLength="188" lengthAdjust="spacingAndGlyphs">DAG Workflow</text>
<text x="2293" y="796" textLength="225" lengthAdjust="spacingAndGlyphs">RAG Architecture</text>
<text x="2655" y="796" textLength="263" lengthAdjust="spacingAndGlyphs">System Integrations</text>
</g>
<text x="1643" y="796" font-size="30" fill="#fff" style="color:#fff" class="m" textLength="190" lengthAdjust="spacingAndGlyphs">Tool Execution</text>

<!-- left panel content -->
<text x="594" y="967" font-size="36" font-weight="700" fill="#111827" textLength="232.6" lengthAdjust="spacingAndGlyphs">Tool Execution</text>
<text x="594" y="1011" font-size="29" fill="#6b7280" textLength="630" lengthAdjust="spacingAndGlyphs">Real-time tool invocations with inputs and outputs</text>

<circle cx="699" cy="1195" r="20" fill="#3b82f6"/>
<use href="#i-build" x="687" y="1183" width="24" height="24" fill="#fff"/>
<text x="740" y="1207" font-size="36" font-weight="700" fill="#111827" textLength="338" lengthAdjust="spacingAndGlyphs">Tool &amp; Agent Activity</text>
<use href="#i-build" x="706.5" y="1265" width="30" height="30" fill="#fff"/>
<text x="752.6" y="1291" font-size="28" font-weight="700" fill="#fff" textLength="67" lengthAdjust="spacingAndGlyphs">Tools</text>

<text x="752.6" y="1472" font-size="29" font-weight="700" fill="#fff" textLength="21" lengthAdjust="spacingAndGlyphs">M</text>
<circle cx="798.5" cy="1497" r="18.5" fill="#fff"/>
<circle cx="798.5" cy="1497" r="14.5" fill="#059669"/>
<circle cx="798.5" cy="1497" r="9.5" fill="#e9f8f1"/>
<path d="M792.5 1497.5l4.5 4.5 7.5-9" fill="none" stroke="#059669" stroke-width="2.2"/>

<text x="835" y="1449" font-size="33" font-weight="700" fill="#111827" textLength="280.5" lengthAdjust="spacingAndGlyphs">Anomaly Detection</text>
<use href="#i-ok" x="1151.5" y="1422.5" width="30" height="30" fill="#15803d"/>
<text x="1189.5" y="1446" font-size="26" fill="#15803d" style="color:#15803d" class="m" textLength="123" lengthAdjust="spacingAndGlyphs">completed</text>

<use href="#i-person" x="833" y="1471" width="30" height="30" fill="#4b5563"/>
<use href="#i-clock" x="997" y="1471" width="29" height="29" fill="#4b5563"/>
<use href="#i-timer" x="1154" y="1470" width="30" height="30" fill="#4b5563"/>
<circle cx="976.5" cy="1486" r="3.5" fill="#4b5563"/>
<circle cx="1133" cy="1486" r="3.5" fill="#4b5563"/>
<g font-size="26" fill="#4b5563">
<text x="871" y="1494" textLength="84.4" lengthAdjust="spacingAndGlyphs">Monitor</text>
<text x="1034" y="1494" textLength="79" lengthAdjust="spacingAndGlyphs">8m ago</text>
<text x="1190.7" y="1494" textLength="60.3" lengthAdjust="spacingAndGlyphs">1.99s</text>
</g>
<use href="#i-less" x="2487" y="1430" width="48" height="48" fill="#4b5563"/>

<!-- flow chips -->
<use href="#i-input" x="1238.7" y="1567.5" width="32" height="32" fill="#2563eb"/>
<text x="1287.8" y="1592.6" font-size="26" font-weight="700" fill="#1d4ed8" textLength="72.2" lengthAdjust="spacingAndGlyphs">INPUT</text>
<use href="#i-arrow" x="1416.5" y="1558.5" width="50" height="50" fill="#a5afbd"/>
<use href="#i-gear" x="1521.5" y="1565.5" width="36" height="36" fill="#9333ea"/>
<text x="1572" y="1592.6" font-size="26" font-weight="700" fill="#7e22ce" textLength="150.7" lengthAdjust="spacingAndGlyphs">PROCESSING</text>
<use href="#i-arrow" x="1779" y="1558.5" width="50" height="50" fill="#9ca3af"/>
<use href="#i-ok" x="1885.5" y="1567" width="33" height="33" fill="#16a34a"/>
<text x="1934" y="1592.6" font-size="26" font-weight="700" fill="#15803d" textLength="93" lengthAdjust="spacingAndGlyphs">OUTPUT</text>

<!-- input data -->
<use href="#i-input" x="748.6" y="1683" width="48" height="48" fill="#2563eb"/>
<text x="812.6" y="1718" font-size="30" font-weight="700" fill="#1e3a8a" textLength="138.8" lengthAdjust="spacingAndGlyphs">Input Data</text>
<use href="#i-copy" x="2408" y="1692" width="30" height="30" fill="#1f2340"/>
<text x="2446" y="1714" font-size="25" fill="#111827" style="color:#111827" class="m" textLength="55" lengthAdjust="spacingAndGlyphs">Copy</text>
<g class="mono">
<text x="773.5" y="1793">{</text>
<text x="802" y="1825.5">"timeWindow": "7d",</text>
<text x="802" y="1857.5">"metrics": [</text>
<text x="831" y="1889.5">"impressions",</text>
<text x="831" y="1921.6">"clicks",</text>
<text x="831" y="1953">"conversions"</text>
<text x="802" y="1985.6">]</text>
<text x="773.5" y="2017.6">}</text>
</g>

<!-- right panel content -->
<text x="2780.7" y="967" font-size="36" font-weight="700" fill="#111827" textLength="296" lengthAdjust="spacingAndGlyphs">Live Execution Log</text>
<text x="2780.7" y="1011" font-size="29" fill="#6b7280" textLength="296" lengthAdjust="spacingAndGlyphs">Real-time agent activity</text>

<g fill="#166534">
<use href="#i-ok" x="2798" y="1112" width="36" height="36"/>
<use href="#i-ok" x="2798" y="2012" width="36" height="36"/>
<use href="#i-ok" x="2798" y="2155" width="36" height="36"/>
</g>
<g fill="#6b21a8">
<use href="#i-psy" x="2798" y="1296" width="36" height="36"/>
<use href="#i-psy" x="2798" y="1438" width="36" height="36"/>
<use href="#i-psy" x="2798" y="1582" width="36" height="36"/>
<use href="#i-psy" x="2798" y="1725" width="36" height="36"/>
<use href="#i-psy" x="2798" y="1869" width="36" height="36"/>
</g>

<g font-size="25" font-weight="700">
<g fill="#3f8a5a">
<text x="2850.8" y="1127.8" textLength="153.7" lengthAdjust="spacingAndGlyphs">Orchestrator</text>
<text x="2850.8" y="2026" textLength="118.2" lengthAdjust="spacingAndGlyphs">Optimizer</text>
<text x="2850.8" y="2171" textLength="118.2" lengthAdjust="spacingAndGlyphs">Optimizer</text>
</g>
<g fill="#8e44c0">
<text x="2850.8" y="1312" textLength="93.2" lengthAdjust="spacingAndGlyphs">Planner</text>
<text x="2850.8" y="1454" textLength="93.2" lengthAdjust="spacingAndGlyphs">Planner</text>
<text x="2850.8" y="1597.5" textLength="112.2" lengthAdjust="spacingAndGlyphs">Predictor</text>
<text x="2850.8" y="1739.6" textLength="112.2" lengthAdjust="spacingAndGlyphs">Predictor</text>
<text x="2850.8" y="1883" textLength="112.2" lengthAdjust="spacingAndGlyphs">Predictor</text>
</g>
</g>
<g font-size="25">
<g fill="#6ea785">
<text x="3661.8" y="1127.8" textLength="78.2" lengthAdjust="spacingAndGlyphs">8m ago</text>
<text x="3661.8" y="2026" textLength="78.2" lengthAdjust="spacingAndGlyphs">8m ago</text>
<text x="3661.8" y="2171" textLength="78.2" lengthAdjust="spacingAndGlyphs">8m ago</text>
</g>
<g fill="#a87fd6">
<text x="3661.8" y="1312" textLength="78.2" lengthAdjust="spacingAndGlyphs">8m ago</text>
<text x="3661.8" y="1454" textLength="78.2" lengthAdjust="spacingAndGlyphs">8m ago</text>
<text x="3661.8" y="1597.5" textLength="78.2" lengthAdjust="spacingAndGlyphs">8m ago</text>
<text x="3661.8" y="1739.6" textLength="78.2" lengthAdjust="spacingAndGlyphs">8m ago</text>
<text x="3661.8" y="1883" textLength="78.2" lengthAdjust="spacingAndGlyphs">8m ago</text>
</g>
</g>
<g font-size="29" fill="#4b5563">
<text x="2850.8" y="1170.4" textLength="847.2" lengthAdjust="spacingAndGlyphs">Campaign analysis complete! All goals achieved. View results to see</text>
<text x="2850.8" y="1210" textLength="150.9" lengthAdjust="spacingAndGlyphs">the insights.</text>
<text x="2850.8" y="1352.5" textLength="787.8" lengthAdjust="spacingAndGlyphs">Generated 5 optimization strategies. Selecting best approach...</text>
<text x="2850.8" y="1496.5" textLength="787.8" lengthAdjust="spacingAndGlyphs">Generated 5 optimization strategies. Selecting best approach...</text>
<text x="2850.8" y="1639.5" textLength="505.2" lengthAdjust="spacingAndGlyphs">ROI forecast: 4.8x with 93% confidence.</text>
<text x="2850.8" y="1783" textLength="505.2" lengthAdjust="spacingAndGlyphs">ROI forecast: 4.7x with 86% confidence.</text>
<text x="2850.8" y="1925.5" textLength="505.2" lengthAdjust="spacingAndGlyphs">ROI forecast: 5.2x with 91% confidence.</text>
<text x="2850.8" y="2069.5" textLength="621.6" lengthAdjust="spacingAndGlyphs">Budget reallocation complete. Expected lift: 23%.</text>
</g>
</svg>
</div>
</body>
</html>
